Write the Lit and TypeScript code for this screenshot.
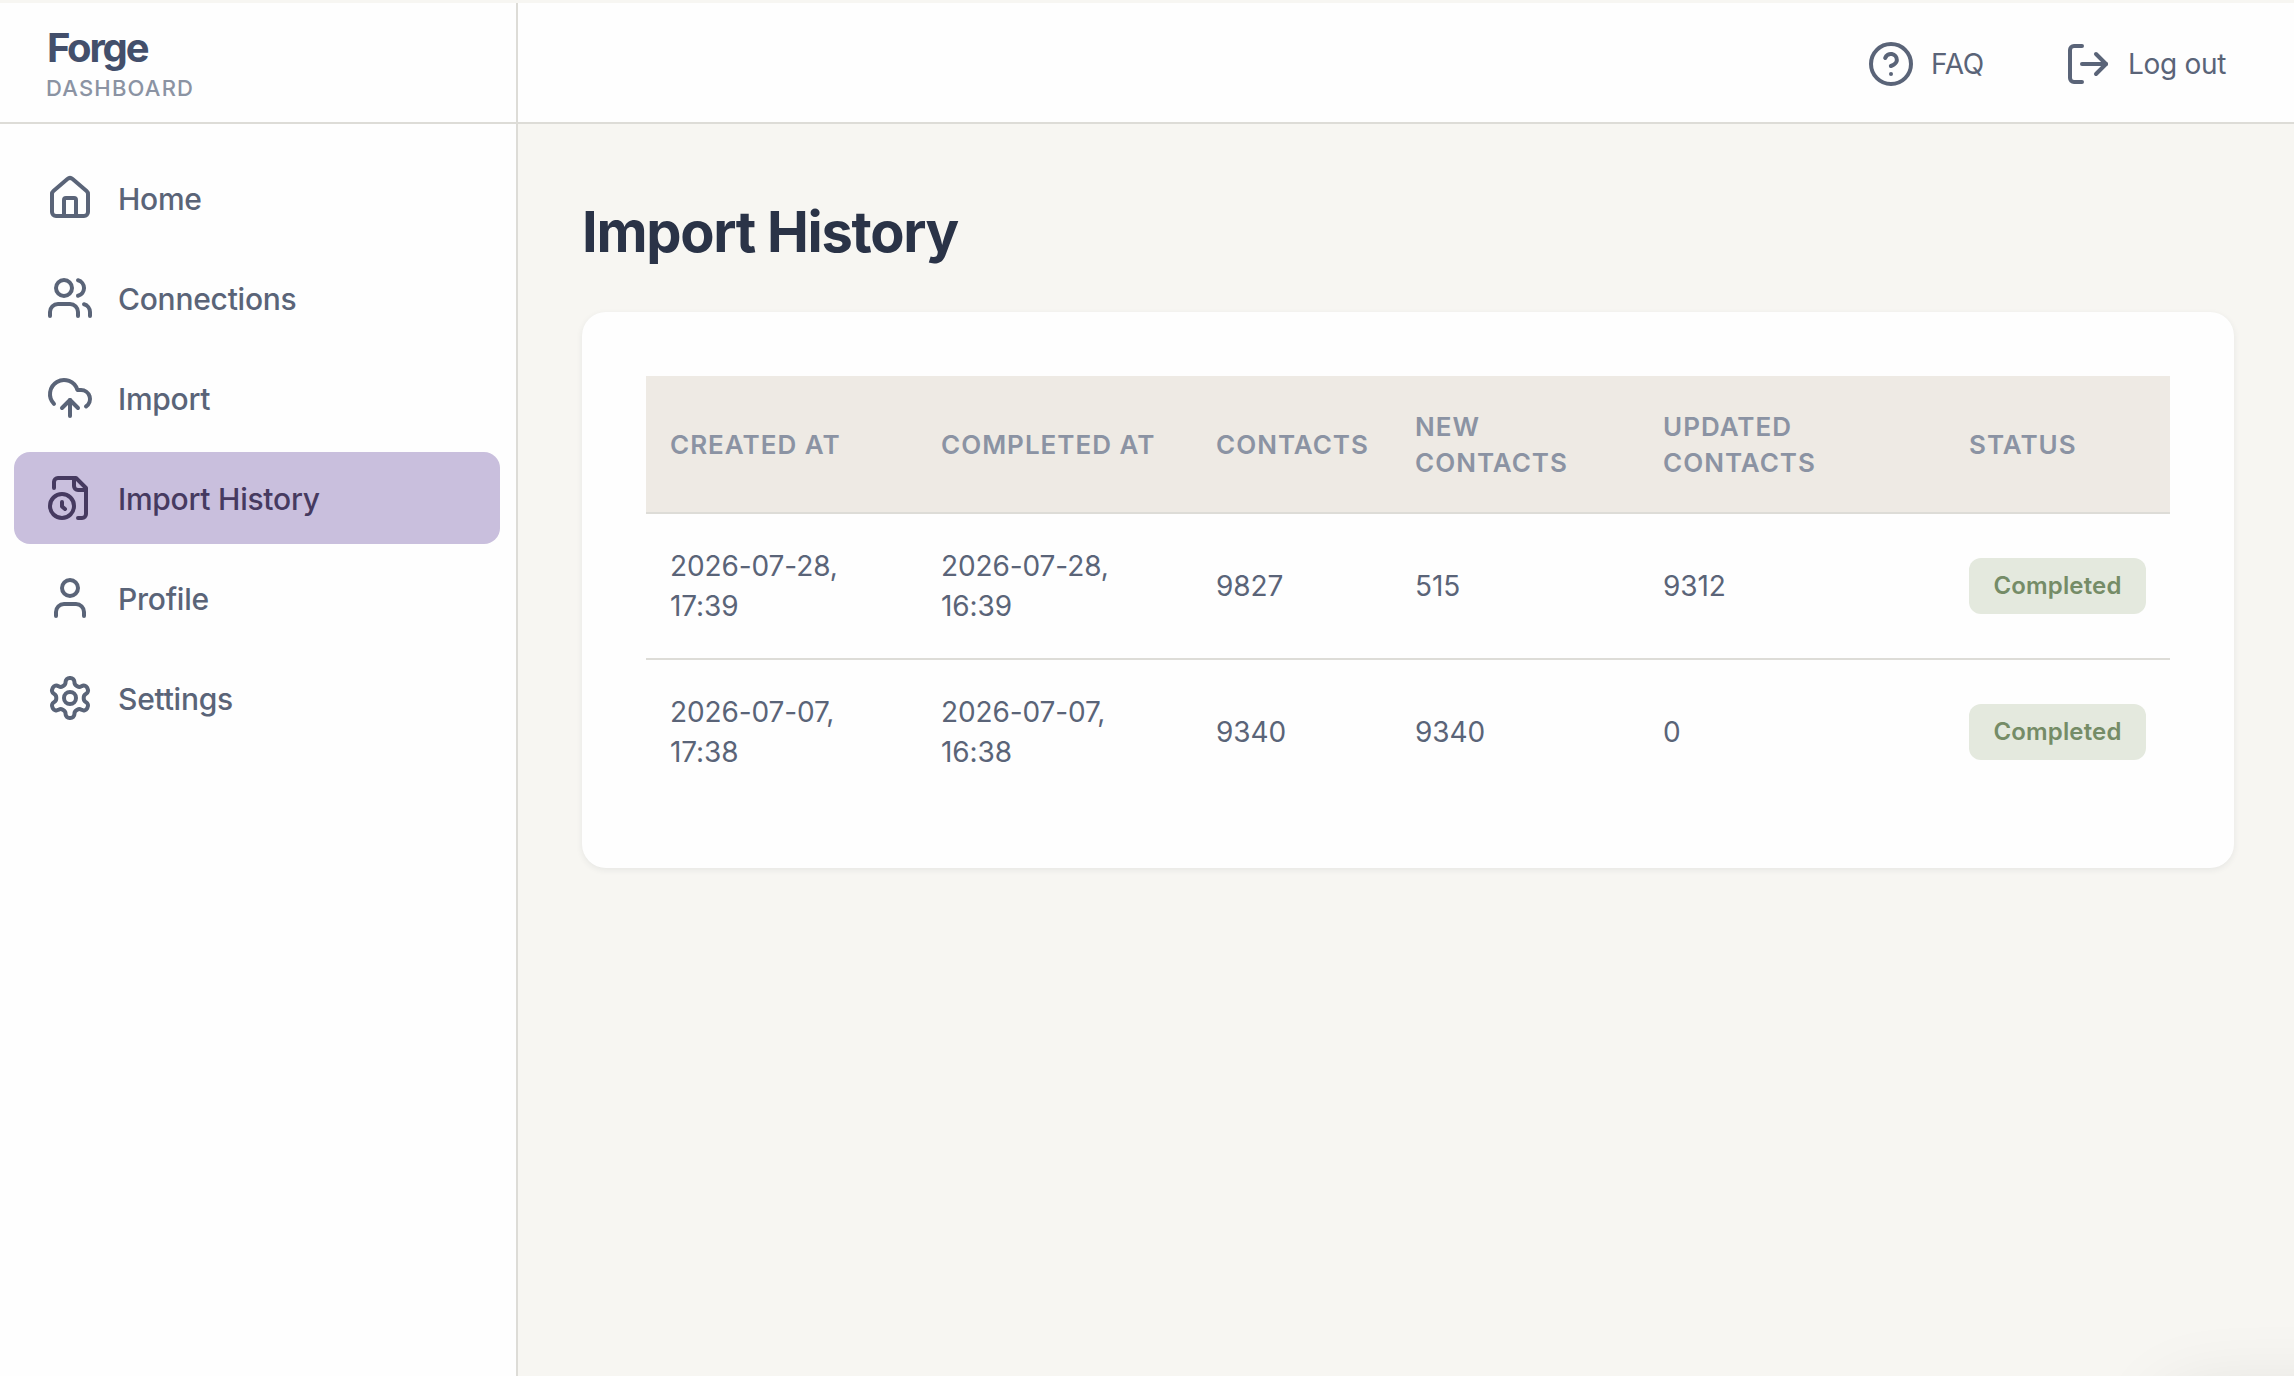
import { LitElement, html, css, svg } from "lit";
import { customElement } from "lit/decorators.js";
import { classMap } from "lit/directives/class-map.js";

const icons = {
  home: svg`<path d="M15 21v-8a1 1 0 0 0-1-1h-4a1 1 0 0 0-1 1v8"/><path d="M3 10a2 2 0 0 1 .709-1.528l7-5.999a2 2 0 0 1 2.582 0l7 5.999A2 2 0 0 1 21 10v9a2 2 0 0 1-2 2H5a2 2 0 0 1-2-2z"/>`,
  users: svg`<path d="M16 21v-2a4 4 0 0 0-4-4H6a4 4 0 0 0-4 4v2"/><circle cx="9" cy="7" r="4"/><path d="M22 21v-2a4 4 0 0 0-3-3.87"/><path d="M16 3.13a4 4 0 0 1 0 7.75"/>`,
  cloud: svg`<path d="M12 13v8"/><path d="M4 14.899A7 7 0 1 1 15.71 8h1.79a4.5 4.5 0 0 1 2.5 8.242"/><path d="m8 17 4-4 4 4"/>`,
  history: svg`<path d="M16 22h2a2 2 0 0 0 2-2V7l-5-5H6a2 2 0 0 0-2 2v3"/><path d="M14 2v4a2 2 0 0 0 2 2h4"/><circle cx="8" cy="16" r="6"/><path d="M9.5 17.5 8 16.25V14"/>`,
  user: svg`<path d="M19 21v-2a4 4 0 0 0-4-4H9a4 4 0 0 0-4 4v2"/><circle cx="12" cy="7" r="4"/>`,
  settings: svg`<path d="M12.22 2h-.44a2 2 0 0 0-2 2v.18a2 2 0 0 1-1 1.73l-.43.25a2 2 0 0 1-2 0l-.15-.08a2 2 0 0 0-2.73.73l-.22.38a2 2 0 0 0 .73 2.73l.15.1a2 2 0 0 1 1 1.72v.51a2 2 0 0 1-1 1.74l-.15.09a2 2 0 0 0-.73 2.73l.22.38a2 2 0 0 0 2.73.73l.15-.08a2 2 0 0 1 2 0l.43.25a2 2 0 0 1 1 1.73V20a2 2 0 0 0 2 2h.44a2 2 0 0 0 2-2v-.18a2 2 0 0 1 1-1.73l.43-.25a2 2 0 0 1 2 0l.15.08a2 2 0 0 0 2.73-.73l.22-.39a2 2 0 0 0-.73-2.73l-.15-.08a2 2 0 0 1-1-1.74v-.5a2 2 0 0 1 1-1.74l.15-.09a2 2 0 0 0 .73-2.73l-.22-.38a2 2 0 0 0-2.73-.73l-.15.08a2 2 0 0 1-2 0l-.43-.25a2 2 0 0 1-1-1.73V4a2 2 0 0 0-2-2z"/><circle cx="12" cy="12" r="3"/>`,
  help: svg`<circle cx="12" cy="12" r="10"/><path d="M9.09 9a3 3 0 0 1 5.83 1c0 2-3 3-3 3"/><path d="M12 17h.01"/>`,
  logout: svg`<path d="M9 21H5a2 2 0 0 1-2-2V5a2 2 0 0 1 2-2h4"/><path d="m16 17 5-5-5-5"/><path d="M21 12H9"/>`,
};

const icon = (name: keyof typeof icons) => html`
  <svg class="icon" viewBox="0 0 24 24" fill="none" stroke="currentColor" stroke-width="2"
    stroke-linecap="round" stroke-linejoin="round" aria-hidden="true">${icons[name]}</svg>`;

const nav: { icon: keyof typeof icons; label: string; active?: boolean }[] = [
  { icon: "home", label: "Home" },
  { icon: "users", label: "Connections" },
  { icon: "cloud", label: "Import" },
  { icon: "history", label: "Import History", active: true },
  { icon: "user", label: "Profile" },
  { icon: "settings", label: "Settings" },
];

const columns = ["Created at", "Completed at", "Contacts", "New contacts", "Updated contacts", "Status"];

const rows = [
  ["2026-07-28, 17:39", "2026-07-28, 16:39", "9827", "515", "9312", "Completed"],
  ["2026-07-07, 17:38", "2026-07-07, 16:38", "9340", "9340", "0", "Completed"],
];

@customElement("app-root")
export class AppRoot extends LitElement {
  static styles = css`
    :host {
      display: block;
      height: 100vh;
      font-family: Inter, "Liberation Sans", sans-serif;
      color: #5a6478;
      -webkit-font-smoothing: antialiased;
    }
    * { box-sizing: border-box; }
    .shell {
      display: grid;
      grid-template-columns: 518px 1fr;
      height: 100%;
      padding-top: 3px;
      background: #f7f6f2;
      overflow: hidden;
    }
    .sidebar {
      background: #fefefe;
      border-right: 2px solid #dddcd7;
    }
    .brand {
      height: 121px;
      border-bottom: 2px solid #dddcd7;
      padding: 21px 46px 0 47px;
    }
    .name {
      font-size: 40px;
      line-height: 48px;
      font-weight: 700;
      letter-spacing: -2.2px;
      color: #434f6b;
    }
    .sub {
      font-size: 22px;
      line-height: 32px;
      font-weight: 450;
      letter-spacing: 1.2px;
      margin-left: -1px;
      color: #8b93a3;
    }
    .nav {
      display: flex;
      flex-direction: column;
      gap: 8px;
      padding: 28px 16px 0 14px;
    }
    .item {
      display: flex;
      align-items: center;
      gap: 24px;
      height: 92px;
      padding: 0 32px;
      border-radius: 16px;
      font-size: 30px;
      font-weight: 500;
      letter-spacing: -0.25px;
      white-space: nowrap;
    }
    .item.active { background: #c9bfdd; color: #463a60; }
    .label { padding-top: 2px; }
    .icon { width: 48px; height: 48px; flex: none; display: block; }
    .main { display: flex; flex-direction: column; min-width: 0; }
    .header {
      height: 121px;
      flex: none;
      display: flex;
      justify-content: flex-end;
      align-items: center;
      gap: 80px;
      padding: 3px 68px 0 0;
      background: #fefefe;
      border-bottom: 2px solid #dddcd7;
    }
    .link {
      display: flex;
      align-items: center;
      gap: 16px;
      font-size: 28px;
      letter-spacing: -0.3px;
      white-space: nowrap;
    }
    .content { padding: 76px 60px 0 64px; }
    .title {
      margin: 0;
      font-size: 56px;
      line-height: 64px;
      font-weight: 700;
      letter-spacing: -1.3px;
      color: #2a3347;
    }
    .card {
      margin-top: 48px;
      height: 556px;
      padding: 64px;
      border-radius: 24px;
      background: #fefefe;
      box-shadow: 0 2px 6px rgba(40, 50, 60, 0.08);
    }
    .row {
      display: grid;
      grid-template-columns: 271px 275px 199px 248px 306px 1fr;
      align-items: center;
      height: 146px;
      border-bottom: 2px solid #dddcd7;
      font-size: 28px;
      line-height: 40px;
      letter-spacing: -0.1px;
    }
    .row:last-child { height: 144px; border-bottom: 0; }
    .row.head {
      height: 138px;
      padding-top: 2px;
      background: #eeeae4;
      color: #8b93a3;
      font-size: 26px;
      line-height: 36px;
      font-weight: 600;
      letter-spacing: 1px;
      text-transform: uppercase;
    }
    .cell { padding: 0 24px; }
    .cell.date { padding-right: 60px; }
    .cell.wrap { padding-right: 90px; }
    .badge {
      display: inline-flex;
      align-items: center;
      justify-content: center;
      height: 56px;
      width: 177px;
      border-radius: 12px;
      background: #e4e9de;
      color: #758c67;
      font-size: 24px;
      font-weight: 600;
      letter-spacing: 0.15px;
      vertical-align: middle;
    }
    .corner {
      position: fixed;
      left: 2164px;
      top: 1396px;
      width: 400px;
      height: 200px;
      border-radius: 28px;
      box-shadow: 0 0 80px rgba(0, 0, 0, 0.11);
    }
  `;

  render() {
    return html`
      <div class="shell">
        <aside class="sidebar">
          <div class="brand">
            <div class="name">Forge</div>
            <div class="sub">DASHBOARD</div>
          </div>
          <nav class="nav">
            ${nav.map(
              (n) => html`<a class=${classMap({ item: true, active: !!n.active })}>
                ${icon(n.icon)}<span class="label">${n.label}</span>
              </a>`,
            )}
          </nav>
        </aside>
        <div class="main">
          <header class="header">
            <a class="link">${icon("help")}<span>FAQ</span></a>
            <a class="link">${icon("logout")}<span>Log out</span></a>
          </header>
          <main class="content">
            <h1 class="title">Import History</h1>
            <section class="card">
              <div class="row head">
                ${columns.map((c, i) => html`<div class=${classMap({ cell: true, wrap: i === 4 })}>${c}</div>`)}
              </div>
              ${rows.map(
                (r) => html`<div class="row">
                  ${r.map((v, i) =>
                    i === 5
                      ? html`<div class="cell"><span class="badge">${v}</span></div>`
                      : html`<div class=${classMap({ cell: true, date: i < 2 })}>${v}</div>`,
                  )}
                </div>`,
              )}
            </section>
          </main>
        </div>
      </div>
      <div class="corner"></div>
    `;
  }
}
